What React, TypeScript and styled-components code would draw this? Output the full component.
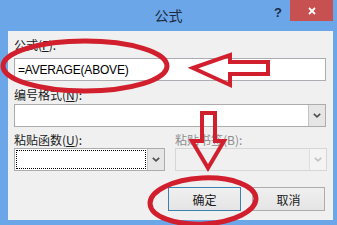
import styled, { createGlobalStyle } from 'styled-components';

const GlobalStyle = createGlobalStyle`
  html, body {
    margin: 0;
    padding: 0;
    background: #ffffff;
  }
`;

const StyledWindow = styled.div`
  position: relative;
  width: 337px;
  height: 225px;
  background: #6ba6e9;
  display: flex;
  flex-direction: column;
  overflow: hidden;
  font-family: "Noto Sans CJK SC", "Liberation Sans", sans-serif;
`;

const StyledTitleBar = styled.div`
  height: 31px;
  flex: none;
  display: grid;
  grid-template-columns: 1fr auto 1fr;
  align-items: start;
`;

const StyledTitle = styled.div`
  grid-column: 2;
  font-size: 14px;
  line-height: 30px;
  color: #1d2b3f;
`;

const StyledControls = styled.div`
  grid-column: 3;
  justify-self: end;
  display: flex;
  align-items: flex-start;
  margin-right: 4px;
`;

const StyledHelp = styled.span`
  font-family: "Liberation Sans", sans-serif;
  font-weight: bold;
  font-size: 13px;
  line-height: 13px;
  margin-top: 6px;
  margin-right: 8px;
  color: #1b2b44;
`;

const StyledClose = styled.div`
  width: 43px;
  height: 21px;
  background: #c75050;
  display: flex;
  align-items: center;
  justify-content: center;
`;

const StyledClient = styled.div`
  flex: 1;
  margin: 0 4px 5px 8px;
  background: #f0f0f0;
  padding: 6px 7px 0 6px;
  display: flex;
  flex-direction: column;
`;

const StyledLabel = styled.div<{ $mt?: number; $disabled?: boolean }>`
  font-size: 12px;
  line-height: 16px;
  height: 16px;
  margin-top: ${(p) => p.$mt ?? 0}px;
  color: ${(p) => (p.$disabled ? '#8d8d8d' : '#1a1a1a')};
  white-space: nowrap;
`;

const StyledInput = styled.div<{ $mt?: number }>`
  height: 23px;
  box-sizing: border-box;
  margin-top: ${(p) => p.$mt ?? 0}px;
  background: #ffffff;
  border: 1px solid #abadb3;
  padding-left: 3px;
  display: flex;
  align-items: center;
  font-family: "Liberation Sans", sans-serif;
  font-size: 12px;
  letter-spacing: -0.2px;
  color: #000000;
`;

const StyledSelect = styled.div<{ $mt?: number; $disabled?: boolean }>`
  height: 23px;
  box-sizing: border-box;
  margin-top: ${(p) => p.$mt ?? 0}px;
  background: ${(p) => (p.$disabled ? '#f0f0f0' : '#ffffff')};
  border: 1px solid ${(p) => (p.$disabled ? '#d6d6d6' : '#acacac')};
  display: flex;
`;

const StyledSelectField = styled.div<{ $focused?: boolean }>`
  flex: 1;
  margin: 1px;
  border: 1px dotted ${(p) => (p.$focused ? '#000000' : 'transparent')};
`;

const StyledSelectArrow = styled.div<{ $disabled?: boolean }>`
  width: 17px;
  flex: none;
  box-sizing: border-box;
  border-left: 1px solid ${(p) => (p.$disabled ? '#dedede' : '#c4c4c4')};
  background: ${(p) => (p.$disabled ? '#f4f4f4' : '#e6e6e6')};
  display: flex;
  align-items: center;
  justify-content: center;
`;

const StyledRow = styled.div`
  display: grid;
  grid-template-columns: 151px 152px;
  column-gap: 10px;
  margin-top: 5px;
`;

const StyledColumn = styled.div`
  display: flex;
  flex-direction: column;
`;

const StyledButtons = styled.div`
  display: flex;
  justify-content: flex-end;
  gap: 11px;
  margin-top: 16px;
  margin-right: 1px;
`;

const StyledButton = styled.div<{ $default?: boolean }>`
  width: 73px;
  height: 24px;
  box-sizing: border-box;
  border: 1px solid ${(p) => (p.$default ? '#3c7fb1' : '#acacac')};
  background: linear-gradient(#f0f0f0, #e5e5e5);
  display: flex;
  align-items: center;
  justify-content: center;
  font-size: 12px;
  color: #1a1a1a;
`;

const StyledAnnotations = styled.svg`
  position: absolute;
  left: 0;
  top: 0;
  width: 337px;
  height: 225px;
  pointer-events: none;
`;

function Chevron({ disabled }: { disabled?: boolean }) {
  return (
    <svg width="8" height="5" viewBox="0 0 8 5">
      <path
        d="M0.8 0.8 L4 3.8 L7.2 0.8"
        fill="none"
        stroke={disabled ? '#c2c2c2' : '#4d4d4d'}
        strokeWidth="1.6"
      />
    </svg>
  );
}

export default function App() {
  const red = '#d11f2e';
  return (
    <>
      <GlobalStyle />
      <StyledWindow>
        <StyledTitleBar>
          <StyledTitle>公式</StyledTitle>
          <StyledControls>
            <StyledHelp>?</StyledHelp>
            <StyledClose>
              <svg width="8" height="8" viewBox="0 0 8 8">
                <path d="M1 1 L7 7 M7 1 L1 7" stroke="#ffffff" strokeWidth="1.8" />
              </svg>
            </StyledClose>
          </StyledControls>
        </StyledTitleBar>
        <StyledClient>
          <StyledLabel>公式(<u>F</u>):</StyledLabel>
          <StyledInput $mt={5}>=AVERAGE(ABOVE)</StyledInput>
          <StyledLabel $mt={6}>编号格式(<u>N</u>):</StyledLabel>
          <StyledSelect $mt={1}>
            <StyledSelectField />
            <StyledSelectArrow>
              <Chevron />
            </StyledSelectArrow>
          </StyledSelect>
          <StyledRow>
            <StyledColumn>
              <StyledLabel>粘贴函数(<u>U</u>):</StyledLabel>
              <StyledSelect>
                <StyledSelectField $focused />
                <StyledSelectArrow>
                  <Chevron />
                </StyledSelectArrow>
              </StyledSelect>
            </StyledColumn>
            <StyledColumn>
              <StyledLabel $disabled>粘贴书签(B):</StyledLabel>
              <StyledSelect $disabled>
                <StyledSelectField />
                <StyledSelectArrow $disabled>
                  <Chevron disabled />
                </StyledSelectArrow>
              </StyledSelect>
            </StyledColumn>
          </StyledRow>
          <StyledButtons>
            <StyledButton $default>确定</StyledButton>
            <StyledButton>取消</StyledButton>
          </StyledButtons>
        </StyledClient>
        <StyledAnnotations viewBox="0 0 337 225">
          <ellipse cx="85" cy="66" rx="82" ry="25" fill="none" stroke={red} strokeWidth="5" />
          <polygon
            points="193,68 230,55 230,62 268,62 268,74 230,74 230,85"
            fill="none"
            stroke={red}
            strokeWidth="4"
          />
          <polygon
            points="202,113 215,113 215,141 224,141 208,168 192,141 202,141"
            fill="none"
            stroke={red}
            strokeWidth="4"
          />
          <ellipse
            cx="203"
            cy="201"
            rx="53"
            ry="23"
            fill="none"
            stroke={red}
            strokeWidth="5"
            transform="rotate(-3 203 201)"
          />
        </StyledAnnotations>
      </StyledWindow>
    </>
  );
}
